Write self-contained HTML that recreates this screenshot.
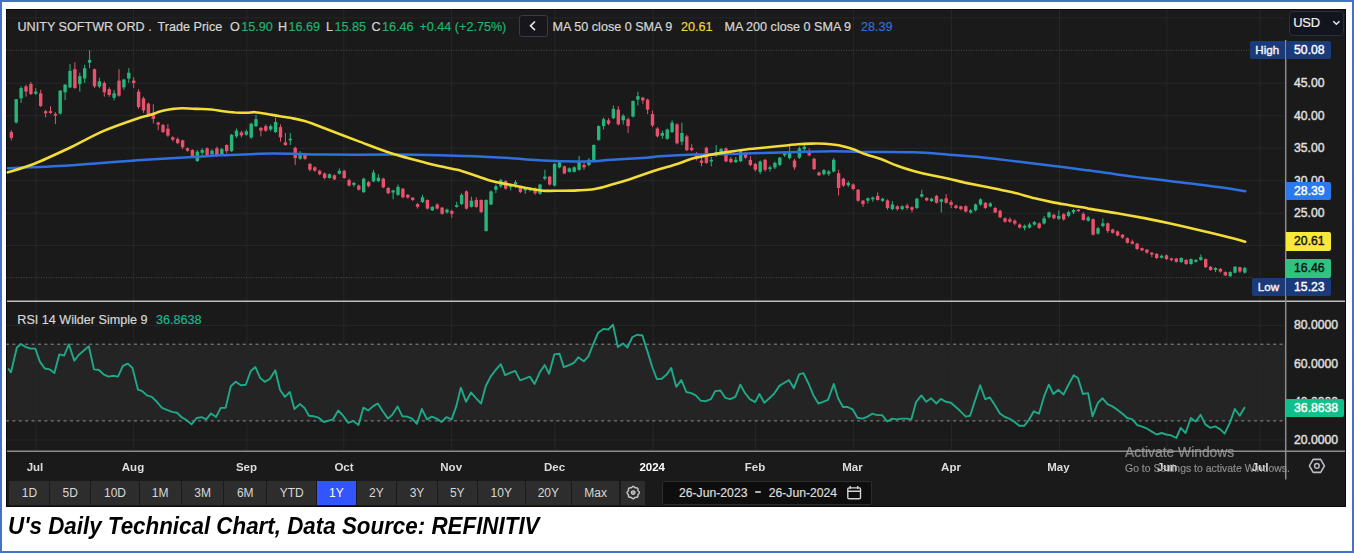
<!DOCTYPE html>
<html><head><meta charset="utf-8"><title>chart</title>
<style>
html,body{margin:0;padding:0;background:#fff;}
body{width:1354px;height:553px;position:relative;overflow:hidden;font-family:"Liberation Sans",sans-serif;}
#frame{position:absolute;left:0;top:0;width:1350px;height:549px;border:2px solid #4472c4;}
#dark{position:absolute;left:6px;top:9px;width:1340px;height:497.5px;background:#1a1a1a;box-shadow:inset 0 0 0 1px #0a0a0a;}
svg{position:absolute;left:0;top:0;}
#all{position:absolute;left:0;top:0;width:1354px;height:553px;filter:blur(0.35px);}
.t{position:absolute;white-space:nowrap;font-size:12.6px;line-height:16px;color:#d6d6d6;-webkit-text-stroke:0.2px currentColor;}
.gr{color:#21b26f}
.t span.gr{margin-left:1.5px;}
.ax{position:absolute;left:1294px;font-size:12.2px;line-height:16px;color:#e0e0e0;font-weight:normal;-webkit-text-stroke:0.4px currentColor;white-space:nowrap;}
.tag{position:absolute;height:18.6px;line-height:18.6px;font-size:12.2px;font-weight:normal;-webkit-text-stroke:0.4px currentColor;border-radius:0 2px 2px 0;white-space:nowrap;box-sizing:border-box;}
.mon{position:absolute;top:459px;width:60px;text-align:center;font-size:11.5px;line-height:16px;font-weight:bold;color:#dcdcdc;}
.mon.yr{color:#fff;}
.btn{position:absolute;top:481px;height:23.5px;line-height:24px;background:#2d2d2d;color:#d8d8d8;font-size:12px;text-align:center;}
.btn.on{background:#3355ff;color:#fff;}
#cap{position:absolute;left:8px;top:511px;transform:scaleX(0.932);font-size:24px;line-height:30px;font-weight:bold;font-style:italic;color:#000;white-space:nowrap;transform-origin:0 0;}
</style></head><body>
<div id="frame"></div>
<div id="all">
<div id="dark"></div>
<svg width="1354" height="553" viewBox="0 0 1354 553">
<rect x="7" y="344.2" width="1278" height="76.7" fill="#242424"/>
<g stroke="#26272b" stroke-width="1" fill="none">
<path d="M36.0,9V450"/>
<path d="M133.4,9V450"/>
<path d="M246.8,9V450"/>
<path d="M343.8,9V450"/>
<path d="M451.6,9V450"/>
<path d="M555.0,9V450"/>
<path d="M653.0,9V450"/>
<path d="M755.4,9V450"/>
<path d="M853.3,9V450"/>
<path d="M951.6,9V450"/>
<path d="M1059.5,9V450"/>
<path d="M1166.8,9V450"/>
<path d="M1260.0,9V450"/>
<path d="M6,17.9H1285"/>
<path d="M6,83.2H1285"/>
<path d="M6,115.7H1285"/>
<path d="M6,148.2H1285"/>
<path d="M6,180.7H1285"/>
<path d="M6,213.2H1285"/>
<path d="M6,245.6H1285"/>
<path d="M6,325.4H1285"/>
<path d="M6,363.6H1285"/>
<path d="M6,401.8H1285"/>
<path d="M6,440.0H1285"/>
</g>
<path d="M6,50.3H1250" stroke="#4a4a4a" stroke-width="1" stroke-dasharray="1,1.5" fill="none"/>
<path d="M6,277.6H1252" stroke="#4a4a4a" stroke-width="1" stroke-dasharray="1,1.5" fill="none"/>
<path d="M6,344.2H1285M6,420.9H1285" stroke="#8e8e8e" stroke-width="1" stroke-dasharray="3,3.4" fill="none"/>
<g shape-rendering="auto">
<path d="M11.3,130.1V140.4" stroke="#e9516d" stroke-width="1"/><rect x="9.6" y="132.1" width="3.4" height="5.8" fill="#e9516d"/>
<path d="M16.2,99.1V123.5" stroke="#27b57c" stroke-width="1"/><rect x="14.5" y="99.1" width="3.4" height="23.4" fill="#27b57c"/>
<path d="M21.1,86.4V102.9" stroke="#27b57c" stroke-width="1"/><rect x="19.4" y="88.1" width="3.4" height="10.3" fill="#27b57c"/>
<path d="M26.0,84.7V96.7" stroke="#e9516d" stroke-width="1"/><rect x="24.3" y="86.4" width="3.4" height="5.2" fill="#e9516d"/>
<path d="M30.9,81.9V95.0" stroke="#e9516d" stroke-width="1"/><rect x="29.2" y="84.0" width="3.4" height="10.0" fill="#e9516d"/>
<path d="M35.8,88.1V95.0" stroke="#27b57c" stroke-width="1"/><rect x="34.1" y="91.6" width="3.4" height="2.1" fill="#27b57c"/>
<path d="M40.7,89.8V107.0" stroke="#e9516d" stroke-width="1"/><rect x="39.0" y="93.3" width="3.4" height="12.7" fill="#e9516d"/>
<path d="M45.6,109.8V117.3" stroke="#e9516d" stroke-width="1"/><rect x="43.9" y="111.2" width="3.4" height="2.1" fill="#e9516d"/>
<path d="M50.5,106.3V113.9" stroke="#e9516d" stroke-width="1"/><rect x="48.8" y="111.2" width="3.4" height="1.7" fill="#e9516d"/>
<path d="M55.4,112.2V124.2" stroke="#e9516d" stroke-width="1"/><rect x="53.7" y="113.9" width="3.4" height="1.7" fill="#e9516d"/>
<path d="M60.2,90.5V114.6" stroke="#27b57c" stroke-width="1"/><rect x="58.5" y="90.5" width="3.4" height="23.0" fill="#27b57c"/>
<path d="M65.1,84.0V100.2" stroke="#27b57c" stroke-width="1"/><rect x="63.4" y="84.7" width="3.4" height="7.6" fill="#27b57c"/>
<path d="M70.0,64.1V88.1" stroke="#27b57c" stroke-width="1"/><rect x="68.3" y="70.9" width="3.4" height="16.5" fill="#27b57c"/>
<path d="M74.9,62.3V88.8" stroke="#e9516d" stroke-width="1"/><rect x="73.2" y="69.2" width="3.4" height="18.9" fill="#e9516d"/>
<path d="M79.8,72.7V91.6" stroke="#27b57c" stroke-width="1"/><rect x="78.1" y="76.1" width="3.4" height="7.9" fill="#27b57c"/>
<path d="M84.7,64.8V83.0" stroke="#27b57c" stroke-width="1"/><rect x="83.0" y="68.2" width="3.4" height="10.3" fill="#27b57c"/>
<path d="M89.6,50.3V68.2" stroke="#27b57c" stroke-width="1"/><rect x="87.9" y="59.9" width="3.4" height="2.8" fill="#27b57c"/>
<path d="M94.5,68.5V88.1" stroke="#e9516d" stroke-width="1"/><rect x="92.8" y="69.2" width="3.4" height="17.2" fill="#e9516d"/>
<path d="M99.4,77.8V88.1" stroke="#27b57c" stroke-width="1"/><rect x="97.7" y="81.3" width="3.4" height="5.2" fill="#27b57c"/>
<path d="M104.3,81.3V96.7" stroke="#e9516d" stroke-width="1"/><rect x="102.6" y="83.0" width="3.4" height="9.3" fill="#e9516d"/>
<path d="M109.2,87.4V96.7" stroke="#e9516d" stroke-width="1"/><rect x="107.5" y="89.2" width="3.4" height="5.8" fill="#e9516d"/>
<path d="M114.1,89.8V100.2" stroke="#27b57c" stroke-width="1"/><rect x="112.4" y="93.3" width="3.4" height="4.5" fill="#27b57c"/>
<path d="M119.0,69.2V96.7" stroke="#e9516d" stroke-width="1"/><rect x="117.3" y="80.6" width="3.4" height="15.1" fill="#e9516d"/>
<path d="M123.9,78.8V89.8" stroke="#27b57c" stroke-width="1"/><rect x="122.2" y="79.5" width="3.4" height="7.9" fill="#27b57c"/>
<path d="M128.8,68.2V83.0" stroke="#27b57c" stroke-width="1"/><rect x="127.1" y="72.7" width="3.4" height="5.8" fill="#27b57c"/>
<path d="M133.7,77.1V88.1" stroke="#e9516d" stroke-width="1"/><rect x="132.0" y="80.6" width="3.4" height="2.4" fill="#e9516d"/>
<path d="M138.6,89.2V108.8" stroke="#e9516d" stroke-width="1"/><rect x="136.9" y="91.6" width="3.4" height="15.5" fill="#e9516d"/>
<path d="M143.5,96.7V112.9" stroke="#e9516d" stroke-width="1"/><rect x="141.8" y="98.4" width="3.4" height="12.0" fill="#e9516d"/>
<path d="M148.4,102.6V115.6" stroke="#e9516d" stroke-width="1"/><rect x="146.7" y="103.6" width="3.4" height="11.3" fill="#e9516d"/>
<path d="M153.3,104.3V123.5" stroke="#e9516d" stroke-width="1"/><rect x="151.6" y="114.9" width="3.4" height="4.1" fill="#e9516d"/>
<path d="M158.2,121.8V130.1" stroke="#e9516d" stroke-width="1"/><rect x="156.5" y="122.5" width="3.4" height="2.1" fill="#e9516d"/>
<path d="M163.0,124.2V132.8" stroke="#e9516d" stroke-width="1"/><rect x="161.3" y="124.9" width="3.4" height="7.2" fill="#e9516d"/>
<path d="M167.9,124.2V136.9" stroke="#e9516d" stroke-width="1"/><rect x="166.2" y="128.7" width="3.4" height="6.9" fill="#e9516d"/>
<path d="M172.8,136.3V141.4" stroke="#e9516d" stroke-width="1"/><rect x="171.1" y="137.3" width="3.4" height="2.4" fill="#e9516d"/>
<path d="M177.7,137.3V144.2" stroke="#e9516d" stroke-width="1"/><rect x="176.0" y="139.0" width="3.4" height="4.1" fill="#e9516d"/>
<path d="M182.6,139.7V149.3" stroke="#e9516d" stroke-width="1"/><rect x="180.9" y="140.4" width="3.4" height="6.9" fill="#e9516d"/>
<path d="M187.5,147.3V151.7" stroke="#e9516d" stroke-width="1"/><rect x="185.8" y="148.3" width="3.4" height="2.4" fill="#e9516d"/>
<path d="M192.4,149.3V156.9" stroke="#e9516d" stroke-width="1"/><rect x="190.7" y="150.0" width="3.4" height="6.2" fill="#e9516d"/>
<path d="M197.3,150.0V162.0" stroke="#27b57c" stroke-width="1"/><rect x="195.6" y="151.7" width="3.4" height="9.3" fill="#27b57c"/>
<path d="M202.2,148.3V155.2" stroke="#27b57c" stroke-width="1"/><rect x="200.5" y="150.0" width="3.4" height="2.8" fill="#27b57c"/>
<path d="M207.1,147.3V156.2" stroke="#e9516d" stroke-width="1"/><rect x="205.4" y="148.3" width="3.4" height="6.9" fill="#e9516d"/>
<path d="M212.0,149.3V156.2" stroke="#27b57c" stroke-width="1"/><rect x="210.3" y="150.7" width="3.4" height="3.4" fill="#27b57c"/>
<path d="M216.9,146.6V156.9" stroke="#e9516d" stroke-width="1"/><rect x="215.2" y="148.3" width="3.4" height="6.9" fill="#e9516d"/>
<path d="M221.8,147.8V156.0" stroke="#27b57c" stroke-width="1"/><rect x="220.1" y="149.1" width="3.4" height="6.2" fill="#27b57c"/>
<path d="M226.7,144.3V153.6" stroke="#e9516d" stroke-width="1"/><rect x="225.0" y="145.0" width="3.4" height="6.2" fill="#e9516d"/>
<path d="M231.6,134.0V151.9" stroke="#27b57c" stroke-width="1"/><rect x="229.9" y="134.7" width="3.4" height="16.5" fill="#27b57c"/>
<path d="M236.5,128.5V138.1" stroke="#27b57c" stroke-width="1"/><rect x="234.8" y="130.6" width="3.4" height="5.8" fill="#27b57c"/>
<path d="M241.4,130.6V137.4" stroke="#e9516d" stroke-width="1"/><rect x="239.7" y="132.3" width="3.4" height="3.1" fill="#e9516d"/>
<path d="M246.3,129.5V135.7" stroke="#27b57c" stroke-width="1"/><rect x="244.6" y="131.3" width="3.4" height="3.4" fill="#27b57c"/>
<path d="M251.2,122.7V138.8" stroke="#27b57c" stroke-width="1"/><rect x="249.5" y="123.7" width="3.4" height="13.8" fill="#27b57c"/>
<path d="M256.0,114.8V127.1" stroke="#27b57c" stroke-width="1"/><rect x="254.3" y="119.2" width="3.4" height="6.9" fill="#27b57c"/>
<path d="M260.9,127.1V136.4" stroke="#e9516d" stroke-width="1"/><rect x="259.2" y="127.8" width="3.4" height="2.8" fill="#e9516d"/>
<path d="M265.8,124.4V131.9" stroke="#e9516d" stroke-width="1"/><rect x="264.1" y="126.1" width="3.4" height="4.5" fill="#e9516d"/>
<path d="M270.7,124.4V131.3" stroke="#27b57c" stroke-width="1"/><rect x="269.0" y="126.1" width="3.4" height="3.4" fill="#27b57c"/>
<path d="M275.6,117.5V133.0" stroke="#27b57c" stroke-width="1"/><rect x="273.9" y="122.0" width="3.4" height="10.0" fill="#27b57c"/>
<path d="M280.5,124.4V141.6" stroke="#e9516d" stroke-width="1"/><rect x="278.8" y="127.1" width="3.4" height="10.3" fill="#e9516d"/>
<path d="M285.4,133.0V145.7" stroke="#e9516d" stroke-width="1"/><rect x="283.7" y="142.3" width="3.4" height="2.8" fill="#e9516d"/>
<path d="M290.3,133.0V145.0" stroke="#27b57c" stroke-width="1"/><rect x="288.6" y="138.7" width="3.4" height="1.6" fill="#27b57c"/>
<path d="M295.2,146.7V164.9" stroke="#e9516d" stroke-width="1"/><rect x="293.5" y="147.8" width="3.4" height="10.3" fill="#e9516d"/>
<path d="M300.1,151.2V159.8" stroke="#27b57c" stroke-width="1"/><rect x="298.4" y="152.9" width="3.4" height="5.8" fill="#27b57c"/>
<path d="M305.0,152.9V159.8" stroke="#e9516d" stroke-width="1"/><rect x="303.3" y="154.3" width="3.4" height="4.5" fill="#e9516d"/>
<path d="M309.9,162.9V171.5" stroke="#e9516d" stroke-width="1"/><rect x="308.2" y="163.9" width="3.4" height="5.8" fill="#e9516d"/>
<path d="M314.8,166.3V171.8" stroke="#e9516d" stroke-width="1"/><rect x="313.1" y="167.3" width="3.4" height="3.4" fill="#e9516d"/>
<path d="M319.7,169.8V175.3" stroke="#e9516d" stroke-width="1"/><rect x="318.0" y="170.8" width="3.4" height="3.4" fill="#e9516d"/>
<path d="M324.6,172.5V179.4" stroke="#e9516d" stroke-width="1"/><rect x="322.9" y="173.5" width="3.4" height="4.5" fill="#e9516d"/>
<path d="M329.5,173.5V178.7" stroke="#27b57c" stroke-width="1"/><rect x="327.8" y="174.2" width="3.4" height="3.8" fill="#27b57c"/>
<path d="M334.4,174.2V180.1" stroke="#e9516d" stroke-width="1"/><rect x="332.7" y="175.3" width="3.4" height="4.1" fill="#e9516d"/>
<path d="M339.3,168.4V174.6" stroke="#27b57c" stroke-width="1"/><rect x="337.6" y="170.8" width="3.4" height="2.8" fill="#27b57c"/>
<path d="M344.2,169.8V178.7" stroke="#e9516d" stroke-width="1"/><rect x="342.5" y="170.8" width="3.4" height="7.2" fill="#e9516d"/>
<path d="M349.1,178.7V186.3" stroke="#e9516d" stroke-width="1"/><rect x="347.4" y="180.1" width="3.4" height="5.5" fill="#e9516d"/>
<path d="M353.9,182.1V186.9" stroke="#27b57c" stroke-width="1"/><rect x="352.2" y="182.8" width="3.4" height="2.1" fill="#27b57c"/>
<path d="M358.8,184.5V190.7" stroke="#e9516d" stroke-width="1"/><rect x="357.1" y="185.6" width="3.4" height="4.1" fill="#e9516d"/>
<path d="M363.7,177.7V193.1" stroke="#27b57c" stroke-width="1"/><rect x="362.0" y="178.7" width="3.4" height="13.4" fill="#27b57c"/>
<path d="M368.6,181.1V187.3" stroke="#e9516d" stroke-width="1"/><rect x="366.9" y="182.1" width="3.4" height="4.1" fill="#e9516d"/>
<path d="M373.5,169.8V182.1" stroke="#27b57c" stroke-width="1"/><rect x="371.8" y="172.5" width="3.4" height="8.9" fill="#27b57c"/>
<path d="M378.4,174.2V182.1" stroke="#27b57c" stroke-width="1"/><rect x="376.7" y="177.7" width="3.4" height="3.4" fill="#27b57c"/>
<path d="M383.3,177.7V188.3" stroke="#e9516d" stroke-width="1"/><rect x="381.6" y="178.7" width="3.4" height="8.6" fill="#e9516d"/>
<path d="M388.2,186.9V194.2" stroke="#e9516d" stroke-width="1"/><rect x="386.5" y="188.0" width="3.4" height="5.2" fill="#e9516d"/>
<path d="M393.1,189.7V199.3" stroke="#27b57c" stroke-width="1"/><rect x="391.4" y="190.4" width="3.4" height="2.1" fill="#27b57c"/>
<path d="M398.0,184.5V195.9" stroke="#27b57c" stroke-width="1"/><rect x="396.3" y="186.9" width="3.4" height="7.9" fill="#27b57c"/>
<path d="M402.9,188.0V198.3" stroke="#e9516d" stroke-width="1"/><rect x="401.2" y="188.7" width="3.4" height="8.6" fill="#e9516d"/>
<path d="M407.8,194.2V198.6" stroke="#e9516d" stroke-width="1"/><rect x="406.1" y="194.8" width="3.4" height="2.8" fill="#e9516d"/>
<path d="M412.7,197.3V201.0" stroke="#e9516d" stroke-width="1"/><rect x="411.0" y="197.6" width="3.4" height="2.4" fill="#e9516d"/>
<path d="M417.6,202.8V208.6" stroke="#e9516d" stroke-width="1"/><rect x="415.9" y="204.1" width="3.4" height="2.8" fill="#e9516d"/>
<path d="M422.5,194.8V202.8" stroke="#27b57c" stroke-width="1"/><rect x="420.8" y="197.3" width="3.4" height="4.8" fill="#27b57c"/>
<path d="M427.4,199.3V209.6" stroke="#e9516d" stroke-width="1"/><rect x="425.7" y="200.0" width="3.4" height="8.6" fill="#e9516d"/>
<path d="M432.3,206.2V211.0" stroke="#27b57c" stroke-width="1"/><rect x="430.6" y="206.9" width="3.4" height="3.4" fill="#27b57c"/>
<path d="M437.2,203.4V209.6" stroke="#e9516d" stroke-width="1"/><rect x="435.5" y="204.5" width="3.4" height="4.1" fill="#e9516d"/>
<path d="M442.1,206.9V214.8" stroke="#e9516d" stroke-width="1"/><rect x="440.4" y="207.6" width="3.4" height="6.2" fill="#e9516d"/>
<path d="M447.0,208.6V213.8" stroke="#27b57c" stroke-width="1"/><rect x="445.3" y="209.6" width="3.4" height="2.8" fill="#27b57c"/>
<path d="M451.8,209.6V217.9" stroke="#e9516d" stroke-width="1"/><rect x="450.1" y="211.0" width="3.4" height="2.8" fill="#e9516d"/>
<path d="M456.7,201.7V207.6" stroke="#27b57c" stroke-width="1"/><rect x="455.0" y="205.2" width="3.4" height="1.7" fill="#27b57c"/>
<path d="M461.6,193.1V205.2" stroke="#27b57c" stroke-width="1"/><rect x="459.9" y="194.8" width="3.4" height="9.3" fill="#27b57c"/>
<path d="M466.5,190.4V209.6" stroke="#e9516d" stroke-width="1"/><rect x="464.8" y="191.4" width="3.4" height="17.2" fill="#e9516d"/>
<path d="M471.4,196.6V207.6" stroke="#27b57c" stroke-width="1"/><rect x="469.7" y="200.7" width="3.4" height="6.2" fill="#27b57c"/>
<path d="M476.3,197.3V207.9" stroke="#e9516d" stroke-width="1"/><rect x="474.6" y="200.0" width="3.4" height="6.9" fill="#e9516d"/>
<path d="M481.2,199.3V213.1" stroke="#e9516d" stroke-width="1"/><rect x="479.5" y="200.0" width="3.4" height="12.0" fill="#e9516d"/>
<path d="M486.1,199.3V231.6" stroke="#27b57c" stroke-width="1"/><rect x="484.4" y="200.0" width="3.4" height="30.9" fill="#27b57c"/>
<path d="M491.0,190.4V205.2" stroke="#27b57c" stroke-width="1"/><rect x="489.3" y="191.4" width="3.4" height="13.1" fill="#27b57c"/>
<path d="M495.9,184.5V193.1" stroke="#27b57c" stroke-width="1"/><rect x="494.2" y="186.3" width="3.4" height="3.4" fill="#27b57c"/>
<path d="M500.8,178.7V188.0" stroke="#27b57c" stroke-width="1"/><rect x="499.1" y="180.1" width="3.4" height="6.2" fill="#27b57c"/>
<path d="M505.7,180.1V189.7" stroke="#e9516d" stroke-width="1"/><rect x="504.0" y="181.1" width="3.4" height="7.6" fill="#e9516d"/>
<path d="M510.6,183.5V190.4" stroke="#27b57c" stroke-width="1"/><rect x="508.9" y="184.9" width="3.4" height="2.4" fill="#27b57c"/>
<path d="M515.5,180.1V188.0" stroke="#27b57c" stroke-width="1"/><rect x="513.8" y="182.1" width="3.4" height="2.4" fill="#27b57c"/>
<path d="M520.4,185.6V193.1" stroke="#e9516d" stroke-width="1"/><rect x="518.7" y="186.9" width="3.4" height="5.2" fill="#e9516d"/>
<path d="M525.3,186.9V193.8" stroke="#27b57c" stroke-width="1"/><rect x="523.6" y="188.0" width="3.4" height="2.4" fill="#27b57c"/>
<path d="M530.2,187.3V191.4" stroke="#27b57c" stroke-width="1"/><rect x="528.5" y="188.7" width="3.4" height="1.7" fill="#27b57c"/>
<path d="M535.1,187.3V194.8" stroke="#e9516d" stroke-width="1"/><rect x="533.4" y="188.7" width="3.4" height="4.5" fill="#e9516d"/>
<path d="M540.0,183.8V194.8" stroke="#27b57c" stroke-width="1"/><rect x="538.3" y="184.5" width="3.4" height="9.3" fill="#27b57c"/>
<path d="M544.9,169.8V180.1" stroke="#27b57c" stroke-width="1"/><rect x="543.2" y="176.6" width="3.4" height="2.1" fill="#27b57c"/>
<path d="M549.7,175.9V185.6" stroke="#e9516d" stroke-width="1"/><rect x="548.0" y="176.6" width="3.4" height="7.9" fill="#e9516d"/>
<path d="M554.6,163.2V186.3" stroke="#27b57c" stroke-width="1"/><rect x="552.9" y="163.9" width="3.4" height="21.7" fill="#27b57c"/>
<path d="M559.5,160.5V168.4" stroke="#27b57c" stroke-width="1"/><rect x="557.8" y="162.2" width="3.4" height="5.2" fill="#27b57c"/>
<path d="M564.4,165.6V174.2" stroke="#e9516d" stroke-width="1"/><rect x="562.7" y="166.3" width="3.4" height="7.2" fill="#e9516d"/>
<path d="M569.3,167.3V172.5" stroke="#27b57c" stroke-width="1"/><rect x="567.6" y="168.4" width="3.4" height="3.4" fill="#27b57c"/>
<path d="M574.2,166.3V172.5" stroke="#27b57c" stroke-width="1"/><rect x="572.5" y="167.3" width="3.4" height="4.5" fill="#27b57c"/>
<path d="M579.1,156.0V170.8" stroke="#27b57c" stroke-width="1"/><rect x="577.4" y="162.2" width="3.4" height="7.6" fill="#27b57c"/>
<path d="M584.0,162.2V169.8" stroke="#e9516d" stroke-width="1"/><rect x="582.3" y="164.9" width="3.4" height="2.4" fill="#e9516d"/>
<path d="M588.9,158.1V166.3" stroke="#27b57c" stroke-width="1"/><rect x="587.2" y="159.8" width="3.4" height="5.2" fill="#27b57c"/>
<path d="M593.8,144.3V161.2" stroke="#27b57c" stroke-width="1"/><rect x="592.1" y="145.0" width="3.4" height="15.5" fill="#27b57c"/>
<path d="M598.7,125.4V140.9" stroke="#27b57c" stroke-width="1"/><rect x="597.0" y="126.1" width="3.4" height="13.8" fill="#27b57c"/>
<path d="M603.6,117.5V129.5" stroke="#27b57c" stroke-width="1"/><rect x="601.9" y="119.2" width="3.4" height="6.9" fill="#27b57c"/>
<path d="M608.5,118.2V125.1" stroke="#e9516d" stroke-width="1"/><rect x="606.8" y="120.3" width="3.4" height="3.4" fill="#e9516d"/>
<path d="M613.4,105.5V119.2" stroke="#27b57c" stroke-width="1"/><rect x="611.7" y="108.9" width="3.4" height="9.3" fill="#27b57c"/>
<path d="M618.3,106.2V125.4" stroke="#e9516d" stroke-width="1"/><rect x="616.6" y="109.6" width="3.4" height="14.8" fill="#e9516d"/>
<path d="M623.2,114.1V124.4" stroke="#27b57c" stroke-width="1"/><rect x="621.5" y="115.8" width="3.4" height="4.5" fill="#27b57c"/>
<path d="M628.1,117.5V133.0" stroke="#e9516d" stroke-width="1"/><rect x="626.4" y="119.2" width="3.4" height="6.9" fill="#e9516d"/>
<path d="M633.0,100.3V117.5" stroke="#27b57c" stroke-width="1"/><rect x="631.3" y="101.0" width="3.4" height="15.5" fill="#27b57c"/>
<path d="M637.9,91.7V105.5" stroke="#27b57c" stroke-width="1"/><rect x="636.2" y="96.2" width="3.4" height="3.4" fill="#27b57c"/>
<path d="M642.8,96.9V103.8" stroke="#e9516d" stroke-width="1"/><rect x="641.1" y="97.6" width="3.4" height="2.8" fill="#e9516d"/>
<path d="M647.6,98.6V114.1" stroke="#e9516d" stroke-width="1"/><rect x="645.9" y="99.6" width="3.4" height="10.0" fill="#e9516d"/>
<path d="M652.5,110.6V127.1" stroke="#e9516d" stroke-width="1"/><rect x="650.8" y="114.1" width="3.4" height="11.3" fill="#e9516d"/>
<path d="M657.4,127.1V137.4" stroke="#e9516d" stroke-width="1"/><rect x="655.7" y="128.5" width="3.4" height="7.9" fill="#e9516d"/>
<path d="M662.3,130.6V138.8" stroke="#27b57c" stroke-width="1"/><rect x="660.6" y="133.0" width="3.4" height="2.8" fill="#27b57c"/>
<path d="M667.2,128.5V139.8" stroke="#27b57c" stroke-width="1"/><rect x="665.5" y="129.5" width="3.4" height="9.3" fill="#27b57c"/>
<path d="M672.1,120.3V133.0" stroke="#27b57c" stroke-width="1"/><rect x="670.4" y="122.7" width="3.4" height="9.3" fill="#27b57c"/>
<path d="M677.0,123.3V144.3" stroke="#e9516d" stroke-width="1"/><rect x="675.3" y="124.4" width="3.4" height="18.9" fill="#e9516d"/>
<path d="M681.9,122.7V145.0" stroke="#27b57c" stroke-width="1"/><rect x="680.2" y="133.0" width="3.4" height="8.6" fill="#27b57c"/>
<path d="M686.8,134.7V151.2" stroke="#e9516d" stroke-width="1"/><rect x="685.1" y="136.4" width="3.4" height="13.8" fill="#e9516d"/>
<path d="M691.7,144.3V151.2" stroke="#e9516d" stroke-width="1"/><rect x="690.0" y="147.8" width="3.4" height="2.4" fill="#e9516d"/>
<path d="M696.6,151.9V160.5" stroke="#e9516d" stroke-width="1"/><rect x="694.9" y="153.6" width="3.4" height="5.2" fill="#e9516d"/>
<path d="M701.5,157.0V166.3" stroke="#e9516d" stroke-width="1"/><rect x="699.8" y="160.5" width="3.4" height="2.4" fill="#e9516d"/>
<path d="M706.4,146.7V163.9" stroke="#e9516d" stroke-width="1"/><rect x="704.7" y="147.8" width="3.4" height="15.1" fill="#e9516d"/>
<path d="M711.3,157.0V166.3" stroke="#27b57c" stroke-width="1"/><rect x="709.6" y="159.8" width="3.4" height="1.7" fill="#27b57c"/>
<path d="M716.2,145.0V157.0" stroke="#27b57c" stroke-width="1"/><rect x="714.5" y="151.9" width="3.4" height="3.4" fill="#27b57c"/>
<path d="M721.1,147.8V155.3" stroke="#27b57c" stroke-width="1"/><rect x="719.4" y="149.1" width="3.4" height="4.5" fill="#27b57c"/>
<path d="M726.0,147.4V162.2" stroke="#e9516d" stroke-width="1"/><rect x="724.3" y="148.4" width="3.4" height="13.1" fill="#e9516d"/>
<path d="M730.9,157.0V163.2" stroke="#e9516d" stroke-width="1"/><rect x="729.2" y="158.8" width="3.4" height="3.4" fill="#e9516d"/>
<path d="M735.8,157.0V162.9" stroke="#27b57c" stroke-width="1"/><rect x="734.1" y="159.8" width="3.4" height="2.4" fill="#27b57c"/>
<path d="M740.7,150.2V162.2" stroke="#27b57c" stroke-width="1"/><rect x="739.0" y="151.2" width="3.4" height="10.0" fill="#27b57c"/>
<path d="M745.5,151.9V158.8" stroke="#e9516d" stroke-width="1"/><rect x="743.8" y="152.9" width="3.4" height="4.8" fill="#e9516d"/>
<path d="M750.4,156.0V166.3" stroke="#e9516d" stroke-width="1"/><rect x="748.7" y="159.8" width="3.4" height="5.2" fill="#e9516d"/>
<path d="M755.3,162.9V171.5" stroke="#e9516d" stroke-width="1"/><rect x="753.6" y="163.9" width="3.4" height="5.8" fill="#e9516d"/>
<path d="M760.2,160.5V174.2" stroke="#27b57c" stroke-width="1"/><rect x="758.5" y="161.5" width="3.4" height="10.3" fill="#27b57c"/>
<path d="M765.1,158.8V171.5" stroke="#e9516d" stroke-width="1"/><rect x="763.4" y="159.8" width="3.4" height="10.0" fill="#e9516d"/>
<path d="M770.0,165.6V171.5" stroke="#27b57c" stroke-width="1"/><rect x="768.3" y="167.3" width="3.4" height="1.7" fill="#27b57c"/>
<path d="M774.9,161.5V169.1" stroke="#27b57c" stroke-width="1"/><rect x="773.2" y="162.9" width="3.4" height="4.5" fill="#27b57c"/>
<path d="M779.8,157.0V166.3" stroke="#27b57c" stroke-width="1"/><rect x="778.1" y="157.7" width="3.4" height="7.2" fill="#27b57c"/>
<path d="M784.7,151.2V157.0" stroke="#27b57c" stroke-width="1"/><rect x="783.0" y="153.6" width="3.4" height="1.7" fill="#27b57c"/>
<path d="M789.6,144.3V159.4" stroke="#27b57c" stroke-width="1"/><rect x="787.9" y="151.9" width="3.4" height="6.2" fill="#27b57c"/>
<path d="M794.5,158.8V169.8" stroke="#e9516d" stroke-width="1"/><rect x="792.8" y="160.5" width="3.4" height="6.9" fill="#e9516d"/>
<path d="M799.4,146.7V158.8" stroke="#27b57c" stroke-width="1"/><rect x="797.7" y="148.4" width="3.4" height="9.3" fill="#27b57c"/>
<path d="M804.3,144.3V151.2" stroke="#27b57c" stroke-width="1"/><rect x="802.6" y="146.7" width="3.4" height="2.4" fill="#27b57c"/>
<path d="M809.2,148.4V156.3" stroke="#e9516d" stroke-width="1"/><rect x="807.5" y="151.2" width="3.4" height="4.1" fill="#e9516d"/>
<path d="M814.1,157.7V170.1" stroke="#e9516d" stroke-width="1"/><rect x="812.4" y="158.8" width="3.4" height="10.3" fill="#e9516d"/>
<path d="M819.0,171.5V175.9" stroke="#e9516d" stroke-width="1"/><rect x="817.3" y="172.5" width="3.4" height="2.8" fill="#e9516d"/>
<path d="M823.9,169.1V175.3" stroke="#27b57c" stroke-width="1"/><rect x="822.2" y="170.1" width="3.4" height="4.1" fill="#27b57c"/>
<path d="M828.8,170.1V175.9" stroke="#27b57c" stroke-width="1"/><rect x="827.1" y="171.5" width="3.4" height="2.4" fill="#27b57c"/>
<path d="M833.7,158.1V172.5" stroke="#27b57c" stroke-width="1"/><rect x="832.0" y="159.8" width="3.4" height="11.7" fill="#27b57c"/>
<path d="M838.6,169.8V195.5" stroke="#e9516d" stroke-width="1"/><rect x="836.9" y="173.2" width="3.4" height="14.8" fill="#e9516d"/>
<path d="M843.4,177.7V186.9" stroke="#e9516d" stroke-width="1"/><rect x="841.7" y="178.7" width="3.4" height="6.9" fill="#e9516d"/>
<path d="M848.3,181.1V186.9" stroke="#27b57c" stroke-width="1"/><rect x="846.6" y="182.8" width="3.4" height="2.4" fill="#27b57c"/>
<path d="M853.2,183.5V190.4" stroke="#e9516d" stroke-width="1"/><rect x="851.5" y="184.5" width="3.4" height="4.5" fill="#e9516d"/>
<path d="M858.1,189.0V201.7" stroke="#e9516d" stroke-width="1"/><rect x="856.4" y="189.7" width="3.4" height="11.0" fill="#e9516d"/>
<path d="M863.0,200.0V206.9" stroke="#e9516d" stroke-width="1"/><rect x="861.3" y="200.7" width="3.4" height="3.4" fill="#e9516d"/>
<path d="M867.9,197.3V203.4" stroke="#27b57c" stroke-width="1"/><rect x="866.2" y="198.3" width="3.4" height="2.4" fill="#27b57c"/>
<path d="M872.8,196.6V201.7" stroke="#27b57c" stroke-width="1"/><rect x="871.1" y="197.6" width="3.4" height="1.7" fill="#27b57c"/>
<path d="M877.7,192.4V200.7" stroke="#e9516d" stroke-width="1"/><rect x="876.0" y="195.9" width="3.4" height="4.1" fill="#e9516d"/>
<path d="M882.6,197.7V202.1" stroke="#27b57c" stroke-width="1"/><rect x="880.9" y="198.7" width="3.4" height="2.1" fill="#27b57c"/>
<path d="M887.5,199.4V209.7" stroke="#e9516d" stroke-width="1"/><rect x="885.8" y="200.4" width="3.4" height="7.6" fill="#e9516d"/>
<path d="M892.4,201.1V210.4" stroke="#27b57c" stroke-width="1"/><rect x="890.7" y="204.5" width="3.4" height="4.5" fill="#27b57c"/>
<path d="M897.3,205.2V210.7" stroke="#e9516d" stroke-width="1"/><rect x="895.6" y="206.3" width="3.4" height="2.8" fill="#e9516d"/>
<path d="M902.2,205.2V210.4" stroke="#27b57c" stroke-width="1"/><rect x="900.5" y="206.3" width="3.4" height="2.8" fill="#27b57c"/>
<path d="M907.1,203.5V209.7" stroke="#e9516d" stroke-width="1"/><rect x="905.4" y="205.6" width="3.4" height="2.4" fill="#e9516d"/>
<path d="M912.0,206.3V212.4" stroke="#e9516d" stroke-width="1"/><rect x="910.3" y="207.3" width="3.4" height="2.4" fill="#e9516d"/>
<path d="M916.9,197.7V209.0" stroke="#27b57c" stroke-width="1"/><rect x="915.2" y="198.7" width="3.4" height="9.3" fill="#27b57c"/>
<path d="M921.8,189.8V197.7" stroke="#27b57c" stroke-width="1"/><rect x="920.1" y="194.2" width="3.4" height="2.4" fill="#27b57c"/>
<path d="M926.7,197.0V201.4" stroke="#e9516d" stroke-width="1"/><rect x="925.0" y="198.0" width="3.4" height="2.4" fill="#e9516d"/>
<path d="M931.6,197.7V202.1" stroke="#27b57c" stroke-width="1"/><rect x="929.9" y="198.7" width="3.4" height="2.4" fill="#27b57c"/>
<path d="M936.5,194.9V203.5" stroke="#e9516d" stroke-width="1"/><rect x="934.8" y="195.9" width="3.4" height="6.9" fill="#e9516d"/>
<path d="M941.3,198.7V212.4" stroke="#27b57c" stroke-width="1"/><rect x="939.6" y="199.4" width="3.4" height="2.4" fill="#27b57c"/>
<path d="M946.2,194.2V203.5" stroke="#e9516d" stroke-width="1"/><rect x="944.5" y="198.3" width="3.4" height="4.5" fill="#e9516d"/>
<path d="M951.1,200.1V208.0" stroke="#e9516d" stroke-width="1"/><rect x="949.4" y="202.1" width="3.4" height="2.8" fill="#e9516d"/>
<path d="M956.0,204.5V209.0" stroke="#e9516d" stroke-width="1"/><rect x="954.3" y="205.6" width="3.4" height="2.4" fill="#e9516d"/>
<path d="M960.9,205.6V210.4" stroke="#e9516d" stroke-width="1"/><rect x="959.2" y="206.3" width="3.4" height="2.8" fill="#e9516d"/>
<path d="M965.8,205.2V212.4" stroke="#e9516d" stroke-width="1"/><rect x="964.1" y="206.3" width="3.4" height="5.2" fill="#e9516d"/>
<path d="M970.7,209.0V213.8" stroke="#27b57c" stroke-width="1"/><rect x="969.0" y="210.4" width="3.4" height="2.1" fill="#27b57c"/>
<path d="M975.6,203.5V211.4" stroke="#27b57c" stroke-width="1"/><rect x="973.9" y="204.5" width="3.4" height="5.8" fill="#27b57c"/>
<path d="M980.5,198.3V205.6" stroke="#27b57c" stroke-width="1"/><rect x="978.8" y="199.4" width="3.4" height="5.2" fill="#27b57c"/>
<path d="M985.4,202.1V209.0" stroke="#e9516d" stroke-width="1"/><rect x="983.7" y="202.8" width="3.4" height="5.2" fill="#e9516d"/>
<path d="M990.3,202.1V207.3" stroke="#27b57c" stroke-width="1"/><rect x="988.6" y="203.5" width="3.4" height="2.8" fill="#27b57c"/>
<path d="M995.2,206.9V213.1" stroke="#e9516d" stroke-width="1"/><rect x="993.5" y="208.0" width="3.4" height="4.5" fill="#e9516d"/>
<path d="M1000.1,209.7V218.3" stroke="#e9516d" stroke-width="1"/><rect x="998.4" y="210.7" width="3.4" height="6.5" fill="#e9516d"/>
<path d="M1005.0,217.3V222.8" stroke="#e9516d" stroke-width="1"/><rect x="1003.3" y="218.3" width="3.4" height="3.4" fill="#e9516d"/>
<path d="M1009.9,217.3V222.8" stroke="#e9516d" stroke-width="1"/><rect x="1008.2" y="219.3" width="3.4" height="2.4" fill="#e9516d"/>
<path d="M1014.8,219.3V225.2" stroke="#e9516d" stroke-width="1"/><rect x="1013.1" y="220.7" width="3.4" height="2.8" fill="#e9516d"/>
<path d="M1019.7,223.4V228.6" stroke="#e9516d" stroke-width="1"/><rect x="1018.0" y="224.5" width="3.4" height="3.1" fill="#e9516d"/>
<path d="M1024.6,224.5V230.3" stroke="#27b57c" stroke-width="1"/><rect x="1022.9" y="225.8" width="3.4" height="2.1" fill="#27b57c"/>
<path d="M1029.5,222.8V228.6" stroke="#27b57c" stroke-width="1"/><rect x="1027.8" y="224.5" width="3.4" height="3.1" fill="#27b57c"/>
<path d="M1034.4,221.0V225.8" stroke="#27b57c" stroke-width="1"/><rect x="1032.7" y="222.1" width="3.4" height="2.4" fill="#27b57c"/>
<path d="M1039.2,222.4V228.9" stroke="#e9516d" stroke-width="1"/><rect x="1037.5" y="223.4" width="3.4" height="4.5" fill="#e9516d"/>
<path d="M1044.1,215.9V224.5" stroke="#27b57c" stroke-width="1"/><rect x="1042.4" y="218.3" width="3.4" height="5.2" fill="#27b57c"/>
<path d="M1049.0,211.4V218.3" stroke="#27b57c" stroke-width="1"/><rect x="1047.3" y="212.4" width="3.4" height="4.8" fill="#27b57c"/>
<path d="M1053.9,213.8V219.3" stroke="#e9516d" stroke-width="1"/><rect x="1052.2" y="214.8" width="3.4" height="3.4" fill="#e9516d"/>
<path d="M1058.8,210.4V220.0" stroke="#27b57c" stroke-width="1"/><rect x="1057.1" y="215.9" width="3.4" height="2.8" fill="#27b57c"/>
<path d="M1063.7,213.1V220.7" stroke="#e9516d" stroke-width="1"/><rect x="1062.0" y="214.2" width="3.4" height="5.2" fill="#e9516d"/>
<path d="M1068.6,210.7V217.3" stroke="#27b57c" stroke-width="1"/><rect x="1066.9" y="212.1" width="3.4" height="3.8" fill="#27b57c"/>
<path d="M1073.5,209.0V214.2" stroke="#27b57c" stroke-width="1"/><rect x="1071.8" y="210.0" width="3.4" height="2.4" fill="#27b57c"/>
<path d="M1078.4,209.0V211.8" stroke="#e9516d" stroke-width="1"/><rect x="1076.7" y="209.6" width="3.4" height="1.6" fill="#e9516d"/>
<path d="M1083.3,212.4V220.7" stroke="#e9516d" stroke-width="1"/><rect x="1081.6" y="213.8" width="3.4" height="6.2" fill="#e9516d"/>
<path d="M1088.2,215.9V221.7" stroke="#27b57c" stroke-width="1"/><rect x="1086.5" y="217.3" width="3.4" height="3.4" fill="#27b57c"/>
<path d="M1093.1,218.4V235.5" stroke="#e9516d" stroke-width="1"/><rect x="1091.4" y="219.2" width="3.4" height="15.5" fill="#e9516d"/>
<path d="M1098.0,226.8V234.7" stroke="#27b57c" stroke-width="1"/><rect x="1096.3" y="228.2" width="3.4" height="5.4" fill="#27b57c"/>
<path d="M1102.9,218.4V227.3" stroke="#27b57c" stroke-width="1"/><rect x="1101.2" y="223.3" width="3.4" height="2.7" fill="#27b57c"/>
<path d="M1107.8,222.5V232.8" stroke="#e9516d" stroke-width="1"/><rect x="1106.1" y="223.3" width="3.4" height="7.6" fill="#e9516d"/>
<path d="M1112.7,228.7V233.6" stroke="#e9516d" stroke-width="1"/><rect x="1111.0" y="229.5" width="3.4" height="3.3" fill="#e9516d"/>
<path d="M1117.6,230.6V236.3" stroke="#e9516d" stroke-width="1"/><rect x="1115.9" y="231.4" width="3.4" height="4.1" fill="#e9516d"/>
<path d="M1122.5,234.1V238.7" stroke="#e9516d" stroke-width="1"/><rect x="1120.8" y="234.7" width="3.4" height="3.0" fill="#e9516d"/>
<path d="M1127.4,237.4V243.6" stroke="#e9516d" stroke-width="1"/><rect x="1125.7" y="238.2" width="3.4" height="4.6" fill="#e9516d"/>
<path d="M1132.3,239.6V244.4" stroke="#e9516d" stroke-width="1"/><rect x="1130.6" y="241.5" width="3.4" height="2.2" fill="#e9516d"/>
<path d="M1137.1,242.8V249.9" stroke="#e9516d" stroke-width="1"/><rect x="1135.4" y="243.6" width="3.4" height="5.4" fill="#e9516d"/>
<path d="M1142.0,247.7V251.2" stroke="#e9516d" stroke-width="1"/><rect x="1140.3" y="248.2" width="3.4" height="2.2" fill="#e9516d"/>
<path d="M1146.9,249.1V253.7" stroke="#e9516d" stroke-width="1"/><rect x="1145.2" y="249.6" width="3.4" height="3.0" fill="#e9516d"/>
<path d="M1151.8,252.0V257.2" stroke="#e9516d" stroke-width="1"/><rect x="1150.1" y="252.6" width="3.4" height="1.9" fill="#e9516d"/>
<path d="M1156.7,253.1V259.1" stroke="#e9516d" stroke-width="1"/><rect x="1155.0" y="253.9" width="3.4" height="4.1" fill="#e9516d"/>
<path d="M1161.6,254.5V258.5" stroke="#27b57c" stroke-width="1"/><rect x="1159.9" y="255.8" width="3.4" height="1.9" fill="#27b57c"/>
<path d="M1166.5,254.5V259.9" stroke="#e9516d" stroke-width="1"/><rect x="1164.8" y="255.3" width="3.4" height="3.8" fill="#e9516d"/>
<path d="M1171.4,257.7V261.3" stroke="#e9516d" stroke-width="1"/><rect x="1169.7" y="258.5" width="3.4" height="1.6" fill="#e9516d"/>
<path d="M1176.3,258.0V262.6" stroke="#e9516d" stroke-width="1"/><rect x="1174.6" y="258.5" width="3.4" height="3.3" fill="#e9516d"/>
<path d="M1181.2,257.2V262.9" stroke="#27b57c" stroke-width="1"/><rect x="1179.5" y="258.0" width="3.4" height="4.1" fill="#27b57c"/>
<path d="M1186.1,259.1V264.8" stroke="#e9516d" stroke-width="1"/><rect x="1184.4" y="259.9" width="3.4" height="4.1" fill="#e9516d"/>
<path d="M1191.0,258.5V264.8" stroke="#27b57c" stroke-width="1"/><rect x="1189.3" y="259.1" width="3.4" height="4.9" fill="#27b57c"/>
<path d="M1195.9,259.1V262.6" stroke="#27b57c" stroke-width="1"/><rect x="1194.2" y="259.9" width="3.4" height="1.9" fill="#27b57c"/>
<path d="M1200.8,254.5V260.7" stroke="#27b57c" stroke-width="1"/><rect x="1199.1" y="257.2" width="3.4" height="2.7" fill="#27b57c"/>
<path d="M1205.7,258.5V268.0" stroke="#e9516d" stroke-width="1"/><rect x="1204.0" y="259.1" width="3.4" height="8.1" fill="#e9516d"/>
<path d="M1210.6,266.1V270.8" stroke="#e9516d" stroke-width="1"/><rect x="1208.9" y="266.7" width="3.4" height="3.3" fill="#e9516d"/>
<path d="M1215.5,267.2V272.1" stroke="#27b57c" stroke-width="1"/><rect x="1213.8" y="268.0" width="3.4" height="1.9" fill="#27b57c"/>
<path d="M1220.4,268.0V272.7" stroke="#e9516d" stroke-width="1"/><rect x="1218.7" y="268.9" width="3.4" height="2.7" fill="#e9516d"/>
<path d="M1225.3,271.3V276.2" stroke="#e9516d" stroke-width="1"/><rect x="1223.6" y="272.1" width="3.4" height="3.3" fill="#e9516d"/>
<path d="M1230.2,271.3V277.0" stroke="#27b57c" stroke-width="1"/><rect x="1228.5" y="272.1" width="3.4" height="4.1" fill="#27b57c"/>
<path d="M1235.0,266.1V273.5" stroke="#27b57c" stroke-width="1"/><rect x="1233.3" y="266.7" width="3.4" height="6.0" fill="#27b57c"/>
<path d="M1239.9,266.7V272.7" stroke="#e9516d" stroke-width="1"/><rect x="1238.2" y="267.2" width="3.4" height="4.3" fill="#e9516d"/>
<path d="M1244.8,266.7V273.5" stroke="#27b57c" stroke-width="1"/><rect x="1243.1" y="268.0" width="3.4" height="4.6" fill="#27b57c"/>
</g>
<path d="M7.9,168.2 C18.0,167.8 47.2,166.8 68.8,165.5 C90.4,164.2 114.6,161.9 137.5,160.3 C160.4,158.8 192.5,157.0 206.3,156.2 C220.0,155.4 209.1,155.7 220.0,155.3 C230.9,154.9 254.4,153.7 271.6,153.6 C288.8,153.5 303.1,154.5 323.1,154.6 C343.2,154.8 372.4,154.5 391.9,154.6 C411.4,154.7 426.3,155.0 440.0,155.3 C453.7,155.6 462.9,155.9 474.4,156.3 C485.8,156.8 497.3,157.4 508.8,158.1 C520.2,158.8 531.7,159.9 543.1,160.5 C554.6,161.0 568.9,161.4 577.5,161.5 C586.1,161.6 589.0,161.4 594.7,161.2 C600.4,160.9 603.3,160.4 611.9,159.8 C620.5,159.2 638.2,158.3 646.3,157.7 C654.3,157.1 652.0,156.9 660.0,156.3 C668.0,155.8 682.9,155.0 694.4,154.6 C705.8,154.2 717.3,154.2 728.8,153.9 C740.2,153.7 751.7,153.3 763.1,152.9 C774.6,152.6 786.0,152.2 797.5,151.9 C809.0,151.6 820.4,151.2 831.9,151.2 C843.3,151.2 858.2,151.8 866.3,151.9 C874.3,152.0 872.0,151.9 880.0,151.9 C888.0,152.0 902.9,151.8 914.4,152.3 C925.8,152.7 937.3,153.8 948.8,154.7 C960.2,155.5 971.7,156.3 983.1,157.4 C994.6,158.6 1006.0,160.2 1017.5,161.6 C1029.0,162.9 1040.4,164.3 1051.9,165.7 C1063.3,167.1 1079.9,169.4 1086.3,170.2 C1092.6,170.9 1084.9,169.6 1090.0,170.4 C1095.1,171.1 1108.1,173.2 1117.1,174.4 C1126.2,175.7 1135.2,176.8 1144.3,178.0 C1153.3,179.1 1162.4,180.1 1171.4,181.2 C1180.5,182.3 1189.5,183.3 1198.5,184.5 C1207.6,185.6 1217.9,186.9 1225.7,188.0 C1233.5,189.1 1242.0,190.7 1245.2,191.2" stroke="#2f70e0" stroke-width="2.5" fill="none" stroke-linecap="round"/>
<path d="M7.9,172.3 C12.3,170.9 24.2,167.8 34.4,163.8 C44.5,159.7 57.3,153.7 68.8,148.3 C80.2,142.8 91.7,136.1 103.1,131.1 C114.6,126.1 129.7,121.1 137.5,118.4 C145.3,115.7 146.0,116.3 150.0,115.0 C154.0,113.8 157.9,112.0 161.8,111.0 C165.7,110.0 170.2,109.4 173.6,108.9 C176.9,108.5 177.9,108.3 181.9,108.3 C185.9,108.3 192.4,108.7 197.3,108.9 C202.2,109.1 207.1,109.1 211.4,109.5 C215.7,109.9 219.4,110.8 223.3,111.3 C227.2,111.8 231.2,112.2 235.1,112.5 C239.0,112.7 243.6,112.7 246.9,112.7 C250.2,112.7 251.6,112.0 255.2,112.2 C258.8,112.5 264.1,113.5 268.2,114.2 C272.3,114.9 276.1,115.6 280.0,116.2 C283.9,116.8 287.9,117.3 291.8,118.1 C295.7,118.8 300.6,119.9 303.6,120.7 C306.6,121.5 306.7,121.7 310.0,122.8 C313.3,124.0 315.2,124.8 323.1,127.8 C331.0,130.8 346.0,136.6 357.5,140.9 C369.0,145.2 380.4,149.9 391.9,153.6 C403.3,157.3 418.2,160.8 426.3,162.9 C434.3,165.0 434.8,165.2 440.0,166.3 C445.2,167.5 451.5,168.3 457.2,169.8 C462.9,171.2 468.6,173.4 474.4,175.3 C480.1,177.1 485.8,179.5 491.6,181.1 C497.3,182.6 503.0,183.4 508.8,184.5 C514.5,185.7 520.2,186.9 525.9,188.0 C531.7,189.0 537.4,190.3 543.1,190.7 C548.9,191.2 554.6,190.8 560.3,190.7 C566.0,190.7 571.8,190.7 577.5,190.4 C583.2,190.1 589.0,190.0 594.7,189.0 C600.4,188.0 606.2,186.1 611.9,184.5 C617.6,182.9 623.3,181.2 629.1,179.4 C634.8,177.5 641.1,175.3 646.3,173.5 C651.4,171.8 654.8,170.7 660.0,169.1 C665.2,167.5 671.5,165.7 677.2,163.9 C682.9,162.1 688.6,159.6 694.4,158.1 C700.1,156.5 705.8,155.7 711.6,154.6 C717.3,153.6 723.0,152.7 728.8,151.9 C734.5,151.0 740.2,150.2 745.9,149.5 C751.7,148.8 757.4,148.3 763.1,147.8 C768.9,147.2 774.6,146.6 780.3,146.0 C786.0,145.5 792.3,144.7 797.5,144.3 C802.7,143.9 806.7,143.7 811.3,143.6 C815.8,143.5 820.4,143.5 825.0,143.8 C829.6,144.1 834.2,144.5 838.8,145.3 C843.3,146.2 847.9,147.6 852.5,149.1 C857.1,150.7 861.7,153.0 866.3,154.6 C870.8,156.2 874.8,157.0 880.0,158.8 C885.2,160.7 891.5,163.6 897.2,165.7 C902.9,167.8 908.6,169.6 914.4,171.2 C920.1,172.8 925.8,174.1 931.6,175.3 C937.3,176.6 943.0,177.5 948.8,178.8 C954.5,180.0 960.2,181.6 965.9,182.9 C971.7,184.1 977.4,185.2 983.1,186.3 C988.9,187.5 994.6,188.5 1000.3,189.8 C1006.0,191.0 1011.8,192.1 1017.5,193.5 C1023.2,195.0 1029.0,196.9 1034.7,198.3 C1040.4,199.8 1046.2,201.0 1051.9,202.1 C1057.6,203.3 1063.3,204.2 1069.1,205.2 C1074.8,206.2 1082.8,207.4 1086.3,208.0 C1089.7,208.6 1084.9,208.0 1090.0,208.9 C1095.1,209.8 1108.1,211.7 1117.1,213.2 C1126.2,214.8 1135.2,216.4 1144.3,218.1 C1153.3,219.9 1162.4,221.8 1171.4,223.8 C1180.5,225.8 1189.5,227.9 1198.5,230.1 C1207.6,232.2 1217.9,234.6 1225.7,236.6 C1233.5,238.5 1242.0,240.9 1245.2,241.7" stroke="#f2dc38" stroke-width="2.6" fill="none" stroke-linecap="round"/>
<path d="M8.1,368.5 L11.0,372.3 L16.8,347.7 L20.8,344.0 L25.5,346.9 L30.4,348.6 L35.3,348.6 L39.9,361.6 L44.8,368.5 L49.7,369.4 L54.4,372.9 L59.3,354.4 L64.2,355.5 L68.8,344.3 L74.3,360.7 L78.7,355.0 L83.9,350.6 L88.8,346.3 L94.0,369.4 L98.9,370.0 L103.5,374.3 L108.5,376.6 L113.4,375.8 L118.0,376.6 L122.9,365.9 L127.8,363.6 L132.5,368.0 L138.0,389.7 L142.3,391.1 L146.9,395.4 L151.8,396.9 L156.8,401.8 L162.0,407.9 L166.9,409.9 L172.1,411.9 L177.0,412.8 L182.2,417.7 L186.5,420.0 L191.5,424.4 L196.7,418.0 L201.6,417.1 L206.2,419.4 L211.1,413.4 L216.0,417.1 L220.7,407.9 L225.6,407.9 L230.8,386.2 L235.7,381.8 L240.9,385.3 L245.8,384.7 L250.8,370.9 L255.4,367.1 L260.3,378.1 L264.6,381.8 L269.8,379.0 L275.3,370.3 L280.0,389.7 L284.9,396.9 L289.8,392.0 L294.4,409.0 L299.9,404.1 L304.5,407.9 L308.9,415.7 L313.8,416.3 L318.7,417.7 L323.8,422.0 L328.7,420.6 L333.0,419.4 L338.2,410.5 L343.1,415.7 L348.3,422.9 L353.3,420.9 L358.5,424.9 L363.4,407.6 L368.3,410.5 L372.9,406.4 L377.8,403.5 L382.8,411.3 L388.0,418.6 L392.3,414.8 L397.5,406.4 L402.4,416.3 L407.3,416.6 L412.0,418.6 L416.9,423.8 L421.8,409.0 L427.0,419.4 L431.9,416.6 L436.6,418.6 L441.5,422.0 L446.4,417.1 L451.6,419.4 L456.5,405.6 L460.8,387.6 L466.1,401.8 L471.0,392.5 L476.2,398.3 L481.1,403.5 L485.7,386.2 L490.6,376.6 L495.6,370.0 L500.8,364.2 L505.1,375.2 L510.0,372.9 L515.2,370.9 L520.1,380.4 L524.8,378.7 L529.7,376.6 L534.6,383.9 L539.8,372.3 L544.7,365.1 L549.1,373.8 L554.3,354.4 L559.5,353.8 L563.8,367.1 L568.7,365.4 L573.9,362.8 L578.3,357.3 L583.8,361.3 L588.4,356.4 L593.3,344.0 L598.2,332.7 L603.4,328.9 L608.4,329.5 L613.0,324.6 L617.9,347.1 L623.1,343.4 L627.4,347.7 L632.4,337.0 L637.6,334.7 L640.0,335.3 L642.3,335.3 L647.2,350.6 L652.1,366.5 L656.8,379.0 L661.7,378.7 L666.6,374.6 L671.2,368.0 L676.2,386.8 L681.4,380.1 L686.3,392.0 L691.2,393.1 L695.8,395.4 L700.7,400.6 L705.9,401.2 L710.9,399.2 L715.2,391.1 L720.4,390.5 L725.3,397.8 L730.2,399.2 L735.4,396.9 L740.4,384.7 L745.0,393.1 L749.9,399.2 L755.1,402.1 L759.4,394.0 L764.4,402.7 L769.3,398.3 L773.9,394.0 L779.4,385.9 L784.0,383.0 L788.9,380.1 L793.9,388.2 L799.1,374.3 L803.4,373.2 L808.3,383.0 L813.5,395.4 L818.4,403.5 L823.1,401.8 L828.0,399.8 L833.8,383.9 L838.1,398.3 L843.0,407.0 L847.7,407.0 L852.6,409.3 L857.5,417.7 L862.7,418.6 L867.6,416.6 L872.2,413.7 L877.2,415.1 L882.1,415.1 L887.3,421.5 L892.2,418.6 L896.8,419.4 L901.7,418.6 L906.7,418.6 L911.3,419.4 L916.2,401.8 L921.4,395.4 L926.3,401.8 L931.2,398.3 L936.4,403.5 L940.8,398.9 L946.0,401.8 L950.9,402.7 L955.8,407.0 L960.0,410.8 L965.8,416.6 L970.1,415.7 L975.0,400.6 L980.2,385.3 L985.2,399.2 L989.8,397.5 L994.7,404.7 L999.9,413.4 L1004.3,416.6 L1009.2,418.6 L1014.1,421.5 L1019.3,425.8 L1024.2,425.8 L1028.8,420.0 L1033.8,411.3 L1039.0,413.7 L1043.9,396.9 L1048.8,384.7 L1053.4,394.0 L1058.3,389.7 L1063.5,394.6 L1068.5,384.7 L1073.7,375.2 L1078.0,378.1 L1082.9,394.0 L1088.1,393.1 L1092.5,416.3 L1098.0,402.7 L1102.6,398.3 L1107.5,404.1 L1112.4,406.4 L1117.6,409.9 L1122.5,413.7 L1127.2,418.0 L1132.1,419.2 L1137.3,425.2 L1142.2,426.7 L1147.1,428.7 L1151.8,431.6 L1156.7,434.5 L1161.6,433.0 L1166.2,434.5 L1171.1,435.4 L1176.3,438.0 L1180.7,427.8 L1185.6,433.0 L1190.8,418.0 L1195.7,421.5 L1200.6,414.8 L1205.3,424.4 L1210.2,427.8 L1215.1,426.4 L1220.3,429.3 L1224.6,433.6 L1229.8,422.9 L1234.8,409.0 L1239.7,415.7 L1244.9,407.0" stroke="#1fa987" stroke-width="1.9" fill="none" stroke-linejoin="round"/>
<path d="M7,301.3H1345" stroke="#bdbdbd" stroke-width="1.6"/>
<path d="M7,451.2H1345" stroke="#8c8c8c" stroke-width="1.4"/>
<path d="M1285.7,40V479.5" stroke="#8c8c8c" stroke-width="1.5"/>
</svg>

<div class="t" style="left:17.5px;top:18.9px;">UNITY SOFTWR ORD</div>
<div class="t" style="left:148.3px;top:18.9px;">.</div>
<div class="t" style="left:157.6px;top:18.9px;">Trade Price</div>
<div class="t" style="left:230px;top:18.9px;">O<span class="gr">15.90</span></div>
<div class="t" style="left:278px;top:18.9px;">H<span class="gr">16.69</span></div>
<div class="t" style="left:326px;top:18.9px;">L<span class="gr">15.85</span></div>
<div class="t" style="left:371.5px;top:18.9px;">C<span class="gr">16.46</span></div>
<div class="t gr" style="left:419.5px;top:18.9px;">+0.44 (+2.75%)</div>
<div style="position:absolute;left:518.5px;top:15px;width:27px;height:19.5px;border:1px solid #3a3a48;border-radius:3px;background:#17171b;"></div>
<div class="t" style="left:552.6px;top:18.9px;">MA 50 close 0 SMA 9</div>
<div class="t" style="left:681px;top:18.9px;color:#f0d832;">20.61</div>
<div class="t" style="left:724.4px;top:18.9px;">MA 200 close 0 SMA 9</div>
<div class="t" style="left:861px;top:18.9px;color:#2f6fdb;">28.39</div>
<div style="position:absolute;left:1288.5px;top:10.5px;width:53.5px;height:23px;border:1px solid #2b2e3c;border-radius:4px;background:#12151d;"></div>
<div class="t" style="left:1293.3px;top:15.1px;font-size:13px;letter-spacing:-0.35px;color:#f0f0f0;">USD</div>

<div class="t" style="left:17.3px;top:311.5px;">RSI 14 Wilder Simple 9</div>
<div class="t" style="left:156px;top:311.5px;color:#1fb58c;">36.8638</div>

<div class="ax" style="top:75.0px">45.00</div><div class="ax" style="top:107.5px">40.00</div><div class="ax" style="top:140.0px">35.00</div><div class="ax" style="top:172.5px">30.00</div><div class="ax" style="top:205.0px">25.00</div><div class="ax" style="top:317.4px">80.0000</div><div class="ax" style="top:355.6px">60.0000</div><div class="ax" style="top:393.8px">40.0000</div><div class="ax" style="top:432.0px">20.0000</div>
<div class="tag" style="left:1250px;top:40.8px;width:34.5px;border-radius:2px 0 0 2px;background:#1a3a7a;color:#f4f4f4;text-align:center;font-size:11.6px;">High</div>
<div class="tag" style="left:1285.6px;top:40.8px;width:45px;background:#1a3a7a;color:#fff;padding-left:8.5px;">50.08</div>
<div class="tag" style="left:1285.6px;top:181.7px;width:45px;background:#2b79ee;color:#fff;padding-left:8.5px;">28.39</div>
<div class="tag" style="left:1285.6px;top:232.4px;width:45px;background:#fae83b;color:#111;padding-left:8.5px;">20.61</div>
<div class="tag" style="left:1285.6px;top:259.4px;width:45px;background:#2fc383;color:#111;padding-left:8.5px;">16.46</div>
<div class="tag" style="left:1252.3px;top:277.8px;width:32.3px;border-radius:2px 0 0 2px;background:#1a3a7a;color:#f4f4f4;text-align:center;font-size:11.6px;">Low</div>
<div class="tag" style="left:1285.6px;top:277.8px;width:45px;background:#1a3a7a;color:#fff;padding-left:8.5px;">15.23</div>
<div class="tag" style="left:1285.6px;top:398.7px;width:58.6px;background:#10bf8a;color:#fff;padding-left:8.5px;">36.8638</div>

<div class="mon" style="left:5.0px">Jul</div><div class="mon" style="left:103.0px">Aug</div><div class="mon" style="left:216.5px">Sep</div><div class="mon" style="left:314.0px">Oct</div><div class="mon" style="left:421.2px">Nov</div><div class="mon" style="left:524.5px">Dec</div><div class="mon yr" style="left:622.2px">2024</div><div class="mon" style="left:725.0px">Feb</div><div class="mon" style="left:822.4px">Mar</div><div class="mon" style="left:921.0px">Apr</div><div class="mon" style="left:1028.4px">May</div><div class="mon" style="left:1137.2px">Jun</div><div class="mon" style="left:1230.1px">Jul</div>
<div class="btn" style="left:9.3px;width:40.2px">1D</div><div class="btn" style="left:50.2px;width:40.2px">5D</div><div class="btn" style="left:91.2px;width:47.7px">10D</div><div class="btn" style="left:139.6px;width:41.2px">1M</div><div class="btn" style="left:181.6px;width:41.9px">3M</div><div class="btn" style="left:224.3px;width:41.9px">6M</div><div class="btn" style="left:267.0px;width:49.4px">YTD</div><div class="btn on" style="left:317.1px;width:38.7px">1Y</div><div class="btn" style="left:356.5px;width:39.7px">2Y</div><div class="btn" style="left:397.2px;width:39.7px">3Y</div><div class="btn" style="left:437.6px;width:39.4px">5Y</div><div class="btn" style="left:477.8px;width:47.0px">10Y</div><div class="btn" style="left:525.5px;width:45.7px">20Y</div><div class="btn" style="left:572.0px;width:47.4px">Max</div>
<div class="btn" style="left:621.4px;width:23.7px;"></div>
<div style="position:absolute;left:662.3px;top:480.5px;width:207.3px;height:22px;border:1px solid #2c2c2c;border-radius:2px;background:#0e0e0e;"></div>
<div class="t" style="left:679px;top:485px;font-size:12.2px;color:#dcdcdc;">26-Jun-2023</div>
<div class="t" style="left:768.7px;top:485px;font-size:12.2px;color:#dcdcdc;">26-Jun-2024</div>

<div class="t" style="left:1124.5px;top:443px;font-size:15.5px;line-height:18px;color:rgba(170,170,170,.75);transform:scaleX(0.893);transform-origin:0 0;">Activate Windows</div>
<div class="t" style="left:1124.5px;top:460px;font-size:11.3px;line-height:16px;color:rgba(170,170,170,.75);transform:scaleX(0.925);transform-origin:0 0;">Go to Settings to activate Windows.</div>

<svg width="1354" height="553" viewBox="0 0 1354 553" style="pointer-events:none">
<!-- gear -->
<g transform="translate(633.2,492.6)" fill="none" stroke="#c6c6c6" stroke-width="1.5" stroke-linejoin="round">
<path d="M0.00,-6.15 L0.40,-6.08 L0.77,-5.87 L1.11,-5.59 L1.42,-5.29 L1.71,-5.03 L2.01,-4.85 L2.35,-4.76 L2.74,-4.74 L3.17,-4.74 L3.61,-4.70 L4.02,-4.58 L4.35,-4.35 L4.58,-4.02 L4.70,-3.61 L4.74,-3.17 L4.74,-2.74 L4.76,-2.35 L4.85,-2.01 L5.03,-1.71 L5.29,-1.42 L5.59,-1.11 L5.87,-0.77 L6.08,-0.40 L6.15,-0.00 L6.08,0.40 L5.87,0.77 L5.59,1.11 L5.29,1.42 L5.03,1.71 L4.85,2.01 L4.76,2.35 L4.74,2.74 L4.74,3.17 L4.70,3.61 L4.58,4.02 L4.35,4.35 L4.02,4.58 L3.61,4.70 L3.17,4.74 L2.74,4.74 L2.35,4.76 L2.01,4.85 L1.71,5.03 L1.42,5.29 L1.11,5.59 L0.77,5.87 L0.40,6.08 L0.00,6.15 L-0.40,6.08 L-0.77,5.87 L-1.11,5.59 L-1.42,5.29 L-1.71,5.03 L-2.01,4.85 L-2.35,4.76 L-2.74,4.74 L-3.17,4.74 L-3.61,4.70 L-4.02,4.58 L-4.35,4.35 L-4.58,4.02 L-4.70,3.61 L-4.74,3.17 L-4.74,2.74 L-4.76,2.35 L-4.85,2.01 L-5.03,1.71 L-5.29,1.42 L-5.59,1.11 L-5.87,0.77 L-6.08,0.40 L-6.15,0.00 L-6.08,-0.40 L-5.87,-0.77 L-5.59,-1.11 L-5.29,-1.42 L-5.03,-1.71 L-4.85,-2.01 L-4.76,-2.35 L-4.74,-2.74 L-4.74,-3.17 L-4.70,-3.61 L-4.58,-4.02 L-4.35,-4.35 L-4.02,-4.58 L-3.61,-4.70 L-3.17,-4.74 L-2.74,-4.74 L-2.35,-4.76 L-2.01,-4.85 L-1.71,-5.03 L-1.42,-5.29 L-1.11,-5.59 L-0.77,-5.87 L-0.40,-6.08 Z"/>
<circle r="1.8" stroke-width="1.3" fill="#909090"/>
</g>
<!-- hex -->
<g transform="translate(1316.9,465.9)" fill="none" stroke="#bcbcc2" stroke-width="1.6" stroke-linejoin="round">
<path d="M-7.5,0 L-3.75,-6.5 L3.75,-6.5 L7.5,0 L3.75,6.5 L-3.75,6.5 Z"/>
<circle r="2.3" stroke-width="1.5"/>
</g>
<!-- calendar -->
<g fill="none" stroke="#d4d4d4" stroke-width="1.4">
<rect x="847.8" y="487.9" width="12.7" height="10.8" rx="1.2"/>
<path d="M847.8,491.2H860.5M850.2,486.1V489M857.7,486.1V489"/>
</g>
<path d="M755.2,492H760.8" stroke="#dcdcdc" stroke-width="1.6"/>
<!-- chevron -->
<path d="M535,21.5 L530.5,25.8 L535,30.1" fill="none" stroke="#e6e6e6" stroke-width="1.6"/>
<path d="M1333.3,21.2 L1336.4,24.2 L1339.5,21.2" fill="none" stroke="#e6e6e6" stroke-width="1.5"/>
</svg>
</div>
<div id="cap">U's Daily Technical Chart, Data Source: REFINITIV</div>
</body></html>
